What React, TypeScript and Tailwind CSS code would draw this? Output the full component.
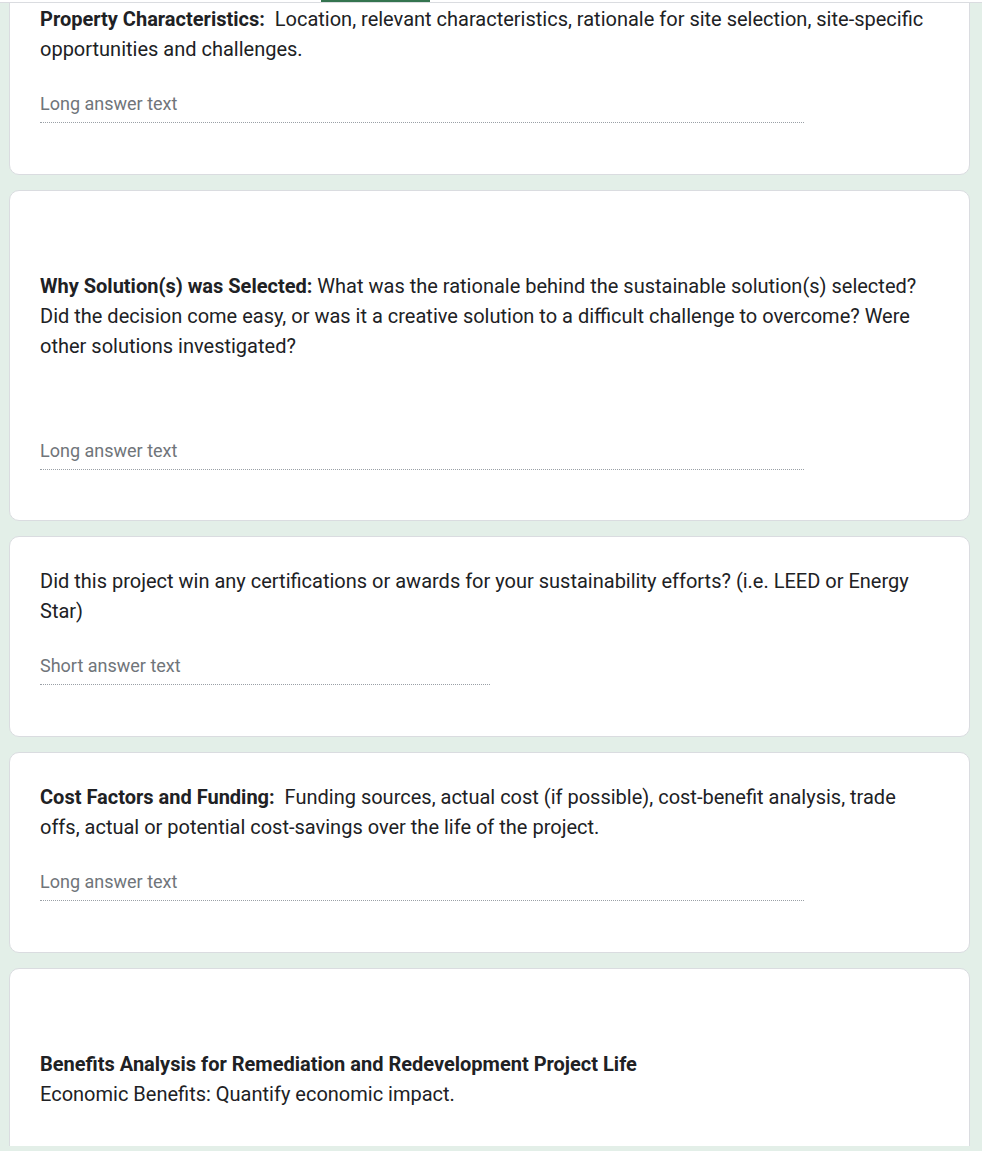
import React from "react";

const font = { fontFamily: "Roboto, 'Noto Sans', Arial, sans-serif" };

function Answer({ kind }: { kind: "long" | "short" }) {
  return (
    <div
      className={`mt-[28px] pb-[6px] border-b border-dotted border-[#9aa0a6] ${
        kind === "long" ? "w-[85%]" : "w-[50%]"
      }`}
    >
      <div className="text-[18px] leading-[24px] text-[#70757a]">
        {kind === "long" ? "Long answer text" : "Short answer text"}
      </div>
    </div>
  );
}

function Card({ children, tight }: { children: React.ReactNode; tight?: boolean }) {
  return (
    <div
      className={`bg-white border border-[#dadce0] rounded-[10px] pt-[29px] px-[30px] ${
        tight ? "pb-[50px]" : "pb-[51px]"
      }`}
    >
      {children}
    </div>
  );
}

export default function App() {
  return (
    <div className="relative h-[1151px] bg-[#e3efe8] overflow-hidden" style={font}>
      <div className="h-[1146px] overflow-hidden">
        <div className="flex flex-col gap-[15px] pl-[9px] pr-[12px] mt-[-26px]">
          <Card>
            <div className="text-[20px] leading-[30px] text-[#202124] whitespace-pre-wrap">
              <b className="font-bold">Property Characteristics:</b>
              {"  Location, relevant characteristics, rationale for site selection, site-specific opportunities and challenges."}
            </div>
            <Answer kind="long" />
          </Card>
          <Card tight>
            <div className="h-[51px]" />
            <div className="text-[20px] leading-[30px] text-[#202124] whitespace-pre-wrap">
              <b className="font-bold">Why Solution(s) was Selected:</b>
              {" What was the rationale behind the sustainable solution(s) selected? Did the decision come easy, or was it a creative solution to a difficult challenge to overcome? Were other solutions investigated?"}
            </div>
            <div className="h-[50px]" />
            <Answer kind="long" />
          </Card>
          <Card>
            <div className="text-[20px] leading-[30px] text-[#202124] whitespace-pre-wrap">
              Did this project win any certifications or awards for your sustainability efforts? (i.e. LEED or Energy Star)
            </div>
            <Answer kind="short" />
          </Card>
          <Card>
            <div className="text-[20px] leading-[30px] text-[#202124] whitespace-pre-wrap">
              <b className="font-bold">Cost Factors and Funding:</b>
              {"  Funding sources, actual cost (if possible), cost-benefit analysis, trade offs, actual or potential cost-savings over the life of the project."}
            </div>
            <Answer kind="long" />
          </Card>
          <Card>
            <div className="h-[51px]" />
            <div className="text-[20px] leading-[30px] text-[#202124] whitespace-pre-wrap">
              <b className="font-bold">Benefits Analysis for Remediation and Redevelopment Project Life</b>
              {"\nEconomic Benefits: Quantify economic impact."}
            </div>
            <div className="h-[50px]" />
            <Answer kind="long" />
          </Card>
        </div>
      </div>
      <div className="absolute top-0 left-0 right-0 h-[3px] bg-white border-b border-[#dadce0]">
        <div className="absolute top-0 left-[321px] w-[109px] h-[2px] bg-[#34744f]" />
      </div>
    </div>
  );
}
